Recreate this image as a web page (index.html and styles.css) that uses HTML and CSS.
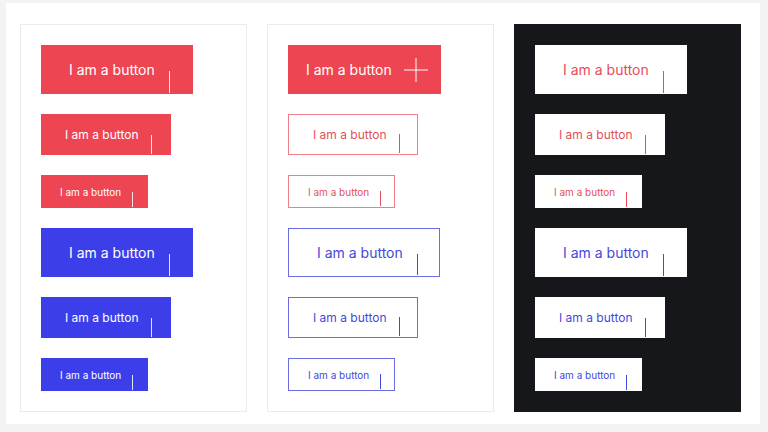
FILE: index.html
```html
<!DOCTYPE html>
<html>

<head>
	<title>
		Buttons
	</title>

	<link rel="stylesheet" href="styles.css">

</head>

<body>
	<div class="sheet">
		<div class="panel">
			<button class="btn lg solid red"><span>I am a button</span><i class="caret"></i></button>
			<button class="btn md solid red"><span>I am a button</span><i class="caret"></i></button>
			<button class="btn sm solid red"><span>I am a button</span><i class="caret"></i></button>
			<button class="btn lg solid blue"><span>I am a button</span><i class="caret"></i></button>
			<button class="btn md solid blue"><span>I am a button</span><i class="caret"></i></button>
			<button class="btn sm solid blue"><span>I am a button</span><i class="caret"></i></button>
		</div>

		<div class="panel">
			<button class="btn lg solid red with-icon">
				<span>I am a button</span>
				<svg class="plus" width="24" height="24" viewBox="0 0 24 24">
					<path d="M12 0 V24 M0 12 H24" stroke="#fff" stroke-width="1" fill="none" />
				</svg>
			</button>
			<button class="btn md outline red"><span>I am a button</span><i class="caret"></i></button>
			<button class="btn sm outline red"><span>I am a button</span><i class="caret"></i></button>
			<button class="btn lg outline blue"><span>I am a button</span><i class="caret"></i></button>
			<button class="btn md outline blue"><span>I am a button</span><i class="caret"></i></button>
			<button class="btn sm outline blue"><span>I am a button</span><i class="caret"></i></button>
		</div>

		<div class="panel dark">
			<button class="btn lg light red"><span>I am a button</span><i class="caret"></i></button>
			<button class="btn md light red"><span>I am a button</span><i class="caret"></i></button>
			<button class="btn sm light red"><span>I am a button</span><i class="caret"></i></button>
			<button class="btn lg light blue"><span>I am a button</span><i class="caret"></i></button>
			<button class="btn md light blue"><span>I am a button</span><i class="caret"></i></button>
			<button class="btn sm light blue"><span>I am a button</span><i class="caret"></i></button>
		</div>
	</div>
</body>

</html>
```

FILE: styles.css
```css
body {
	margin: 0;
	background-color: #f3f3f4;
	font-family: Inter, "Noto Sans", sans-serif;
}

.sheet {
	margin: 3px 8px 0 6px;
	height: 421px;
	background-color: #fff;
	display: flex;
	gap: 20px;
	padding: 21px 0 0 14px;
	box-sizing: border-box;
}

.panel {
	width: 227px;
	height: 388px;
	box-sizing: border-box;
	border: 1px solid #ebebed;
	padding: 20px;
	display: flex;
	flex-direction: column;
	align-items: flex-start;
	gap: 20px;
}

.dark {
	background-color: #16171b;
	border-color: #16171b;
}

.btn {
	display: flex;
	align-items: stretch;
	box-sizing: border-box;
	border: none;
	margin: 0;
	font-family: Inter, "Noto Sans", sans-serif;
	font-weight: 400;
	background: none;
	cursor: pointer;
}

.btn span {
	align-self: center;
	white-space: nowrap;
}

.caret {
	display: block;
	width: 1px;
	align-self: flex-end;
}

.lg {
	width: 152px;
	height: 49px;
	padding-left: 28px;
	font-size: 14px;
}

.lg .caret {
	height: 22px;
	margin-left: 14px;
}

.md {
	width: 130px;
	height: 41px;
	padding-left: 24px;
	font-size: 12px;
}

.md .caret {
	height: 19px;
	margin-left: 12px;
}

.sm {
	width: 107px;
	height: 33px;
	padding-left: 19px;
	font-size: 10px;
}

.sm .caret {
	height: 15px;
	margin-left: 11px;
}

.with-icon {
	width: 153px;
	padding-left: 18px;
	align-items: center;
}

.plus {
	margin-left: 12px;
	display: block;
}

.solid {
	color: #fff;
}

.solid .caret {
	background-color: rgba(255, 255, 255, 0.85);
}

.solid.red {
	background-color: #ee4553;
}

.solid.blue {
	background-color: #3c3fe9;
}

.outline {
	background-color: #fff;
	border: 1px solid;
}

.outline.red {
	color: #e3505d;
	border-color: #ef7f89;
}

.outline.red .caret {
	background-color: #e3505d;
}

.outline.blue {
	color: #4447db;
	border-color: #6b6de3;
}

.outline.blue .caret {
	background-color: #4447db;
}

.outline.lg .caret {
	height: 21px;
}

.light {
	background-color: #fff;
}

.light.red {
	color: #e84c5a;
}

.light.red .caret {
	background-color: #e84c5a;
}

.light.blue {
	color: #4548dd;
}

.light.blue .caret {
	background-color: #4548dd;
}
```
